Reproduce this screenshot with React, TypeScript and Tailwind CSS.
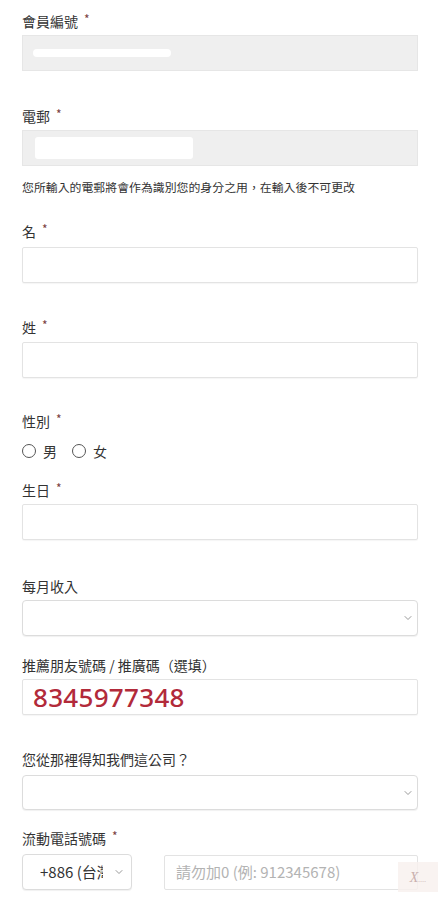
import { ChevronDown } from 'lucide-react';

const font = { fontFamily: '"Noto Sans CJK TC", "Noto Sans", sans-serif' };

function Label({ text, required, className = '' }: { text: string; required?: boolean; className?: string }) {
  return (
    <div className={`h-5 flex items-center text-[14px] leading-5 text-[#333] ${className}`}>
      <span>{text}</span>
      {required && <span className="ml-[6px] text-[12px] text-[#7a4040] -mt-1">*</span>}
    </div>
  );
}

function TextBox({ className = '', children }: { className?: string; children?: React.ReactNode }) {
  return (
    <div className={`h-9 border border-[#e3e3e3] rounded-[2px] bg-white shadow-[0_1px_1px_rgba(0,0,0,0.04)] flex items-center ${className}`}>
      {children}
    </div>
  );
}

function SelectBox({ className = '' }: { className?: string }) {
  return (
    <div className={`h-9 border border-[#dcdcdc] rounded-[4px] bg-white shadow-[0_1px_1px_rgba(0,0,0,0.06)] flex items-center justify-end pr-[3px] ${className}`}>
      <ChevronDown className="w-3 h-3 text-[#777]" strokeWidth={1.5} />
    </div>
  );
}

export default function App() {
  return (
    <div className="relative h-[900px] overflow-hidden bg-white" style={font}>
      <div className="pl-[22px] pr-[20px] pt-[11px]">
        <Label text="會員編號" required />
        <div className="mt-1 h-9 bg-[#efefef] border border-[#e6e6e6] flex items-center pl-[10px]">
          <div className="w-[138px] h-[8px] bg-white rounded-full" />
        </div>

        <Label text="電郵" required className="mt-[35px]" />
        <div className="mt-1 h-9 bg-[#efefef] border border-[#e6e6e6] flex items-center pl-[12px]">
          <div className="w-[158px] h-[22px] bg-white rounded-[3px]" />
        </div>

        <div className="mt-[13px] h-4 text-[11.9px] leading-4 text-[#333] whitespace-nowrap">
          您所輸入的電郵將會作為識別您的身分之用，在輸入後不可更改
        </div>

        <Label text="名" required className="mt-[26px]" />
        <TextBox className="mt-[6px]" />

        <Label text="姓" required className="mt-[34px]" />
        <TextBox className="mt-[5px]" />

        <Label text="性別" required className="mt-[33px]" />
        <div className="mt-[10px] h-5 flex items-center text-[14px] text-[#333]">
          <span className="w-[14px] h-[14px] rounded-full border border-[#555]" />
          <span className="ml-[7px]">男</span>
          <span className="ml-[15px] w-[14px] h-[14px] rounded-full border border-[#555]" />
          <span className="ml-[7px]">女</span>
        </div>

        <Label text="生日" required className="mt-[19px]" />
        <TextBox className="mt-1" />

        <Label text="每月收入" className="mt-9" />
        <SelectBox className="mt-1" />

        <Label text="推薦朋友號碼 / 推廣碼（選填）" className="mt-[19px]" />
        <TextBox className="mt-1 pl-[10px]">
          <span className="text-[26px] font-medium text-[#b22a3a] tracking-[0.3px]" style={{ fontFamily: '"Noto Sans", Roboto, sans-serif' }}>
            8345977348
          </span>
        </TextBox>

        <Label text="您從那裡得知我們這公司？" className="mt-[34px]" />
        <SelectBox className="mt-[6px] h-[35px]" />

        <Label text="流動電話號碼" required className="mt-[18px]" />
        <div className="mt-[6px] flex items-center gap-8">
          <div className="w-[110px] h-9 border border-[#dcdcdc] rounded-[4px] bg-white shadow-[0_1px_1px_rgba(0,0,0,0.06)] flex items-center pl-[17px] pr-[6px]">
            <span className="w-[63px] overflow-hidden whitespace-nowrap text-[15px] text-[#333]">+886 (台灣)</span>
            <ChevronDown className="ml-auto w-3 h-3 text-[#777]" strokeWidth={1.5} />
          </div>
          <div className="flex-1 h-[35px] border border-[#e3e3e3] rounded-[2px] bg-white flex items-center pl-[11px] text-[15px] text-[#b3b3b3]">
            請勿加0 (例: 912345678)
          </div>
        </div>
      </div>

      <div className="absolute right-0 top-[862px] w-[40px] h-[30px] bg-[#f8f0ee]/80 flex items-center justify-center">
        <span className="italic text-[14px] text-[#c9b0ae]" style={{ fontFamily: '"Liberation Serif", serif' }}>X<span className="text-[8px]">....</span></span>
      </div>
    </div>
  );
}
